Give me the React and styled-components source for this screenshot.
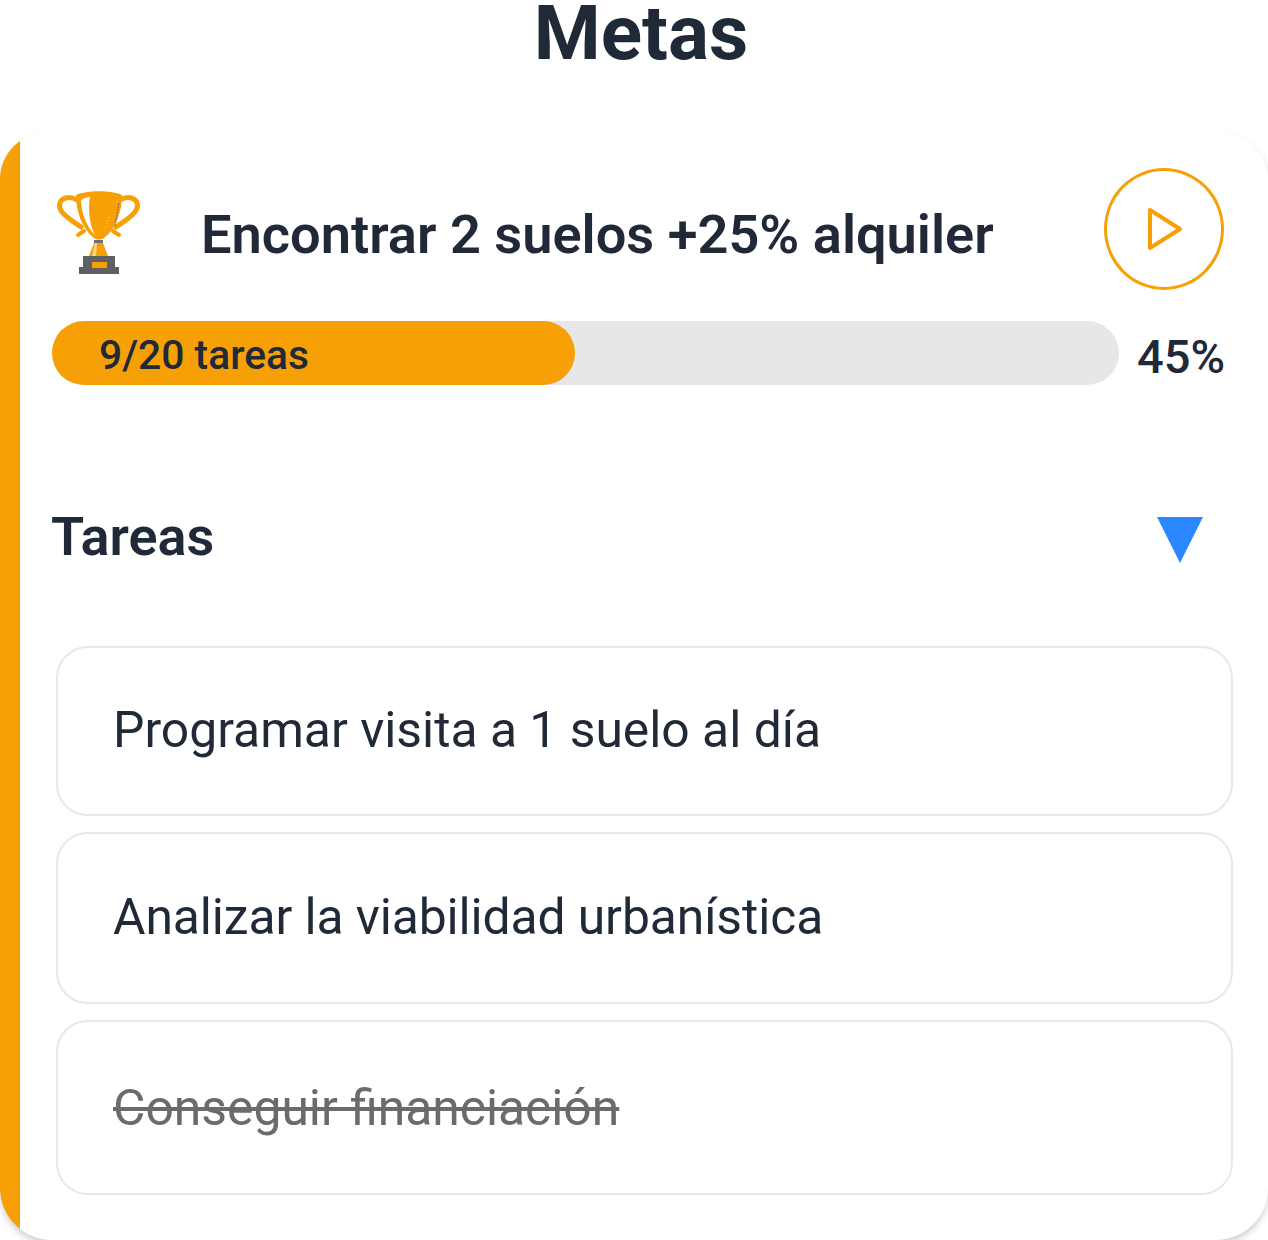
import styled, { createGlobalStyle } from 'styled-components';

const Global = createGlobalStyle`
  html, body {
    margin: 0;
    padding: 0;
    background: #ffffff;
  }
  body {
    font-family: Roboto, "Liberation Sans", sans-serif;
    color: #1f2937;
  }
`;

const Page = styled.div`
  width: 1268px;
  height: 1240px;
  overflow: hidden;
  display: flex;
  flex-direction: column;
`;

const Title = styled.h1`
  flex: none;
  margin: 0;
  height: 133px;
  font-size: 76.5px;
  line-height: 66px;
  font-weight: 700;
  text-align: center;
  color: #1f2937;
  padding-left: 14px;
  box-sizing: border-box;
`;

const Card = styled.section`
  flex: none;
  height: 1107px;
  display: flex;
  overflow: hidden;
  border-radius: 46px 46px 52px 52px;
  box-shadow: 0 4px 6px rgba(0, 0, 0, 0.18);
  background: #ffffff;
`;

const Accent = styled.div`
  flex: none;
  width: 20px;
  background: #f6a006;
`;

const Body = styled.div`
  flex: 1;
  min-width: 0;
  padding: 35px 35px 0 32px;
`;

const GoalRow = styled.div`
  display: flex;
  align-items: center;
  height: 122px;
`;

const Trophy = styled.svg`
  width: 84px;
  height: 84px;
  flex: none;
  margin: 8px 0 0 5px;
  overflow: visible;
`;

const GoalName = styled.h2`
  margin: 11px 0 0 60px;
  flex: 1;
  font-size: 54.2px;
  line-height: 60px;
  font-weight: 600;
  color: #1f2937;
  white-space: nowrap;
`;

const PlayButton = styled.button`
  box-sizing: border-box;
  flex: none;
  width: 120px;
  height: 122px;
  margin-right: 9px;
  padding: 0;
  border: 3px solid #f6a006;
  border-radius: 50%;
  background: transparent;
  display: flex;
  align-items: center;
  justify-content: center;
`;

const ProgressRow = styled.div`
  display: flex;
  align-items: flex-start;
  gap: 18px;
  margin-top: 31px;
`;

const Track = styled.div`
  flex: none;
  width: 1067px;
  height: 64px;
  border-radius: 32px;
  background: #e7e7e9;
`;

const Fill = styled.div`
  height: 100%;
  border-radius: 32px;
  background: #f6a006;
  box-sizing: border-box;
  padding-left: 47px;
  font-size: 40.8px;
  line-height: 69px;
  font-weight: 500;
  color: #1f2937;
  white-space: nowrap;
`;

const Percent = styled.span`
  font-size: 47px;
  line-height: 72px;
  font-weight: 500;
  color: #1f2937;
`;

const TasksHeader = styled.div`
  display: flex;
  align-items: center;
  justify-content: space-between;
  margin-top: 109px;
  height: 70px;
  padding-right: 30px;
`;

const TasksTitle = styled.h3`
  margin: 0 0 0 -1px;
  font-size: 54px;
  line-height: 70px;
  font-weight: 600;
  color: #1f2937;
`;

const Arrow = styled.svg`
  width: 46px;
  height: 46px;
  margin-top: 6px;
`;

const TaskList = styled.ul`
  list-style: none;
  margin: 74px 0 0 4px;
  padding: 0;
  display: flex;
  flex-direction: column;
  gap: 16px;
`;

const Task = styled.li`
  box-sizing: border-box;
  width: 1177px;
  height: ${(p) => p.$h}px;
  border: 2px solid #e8e8ea;
  border-radius: 32px;
  padding: 0 0 ${(p) => p.$lift || 0}px 55px;
  display: flex;
  align-items: center;
  font-size: 49.8px;
  font-weight: 400;
  letter-spacing: ${(p) => p.$tight || 0}px;
  color: ${(p) => (p.$done ? '#6b6b6d' : '#1f2937')};
  text-decoration: ${(p) => (p.$done ? 'line-through' : 'none')};
`;

const tasks = [
  { id: 1, text: 'Programar visita a 1 suelo al día', h: 170, lift: 2 },
  { id: 2, text: 'Analizar la viabilidad urbanística', h: 172, lift: 3, tight: -0.1 },
  { id: 3, text: 'Conseguir financiación', h: 175, done: true },
];

export default function App() {
  return (
    <Page>
      <Global />
      <Title>Metas</Title>
      <Card>
        <Accent />
        <Body>
          <GoalRow>
            <Trophy viewBox="0 0 84 84">
              <g fill="none" stroke="#f6a006" strokeWidth="5" strokeLinecap="round">
                <path d="M20 9 C12 4 3 7 2.5 14 C2 22 14 29 24 36" />
                <path d="M63 9 C71 4 80 7 80.5 14 C81 22 69 29 59 36" />
                <path d="M21 44 L27 40" strokeWidth="4" />
                <path d="M62 44 L56 40" strokeWidth="4" />
              </g>
              <path d="M19 4 C30 -1 54 -1 65 4 C65 20 59 38 47 47 C44 49 40 49 37 47 C25 38 19 20 19 4 Z" fill="#f6a006" />
              <path d="M24 9 C27 7 30 6 33 6 C31 18 32 32 38 44 C30 36 24 22 24 9 Z" fill="#ffffff" />
              <path d="M62 12 L58 35" fill="none" stroke="#6b7280" strokeWidth="1.5" strokeDasharray="2 1" opacity="0.75" />
              <path d="M52 26 L48 38" fill="none" stroke="#fcd58a" strokeWidth="1" strokeDasharray="1 2" />
              <path d="M37 52 H46 L51 65 H32 Z" fill="#f6a006" />
              <path d="M38 52 H40 L39 65 H35 Z" fill="#fbd38d" />
              <rect x="37" y="49" width="9" height="3" fill="#6b6f76" />
              <path d="M26 65 H58 V76 H62 V83 H22 V76 H26 Z" fill="#5f6064" />
              <rect x="35" y="71" width="15" height="6" fill="#f6a006" />
            </Trophy>
            <GoalName>Encontrar 2 suelos +25% alquiler</GoalName>
            <PlayButton aria-label="Iniciar">
              <svg width="40" height="48" viewBox="0 0 40 48">
                <path d="M6 5 L36 24 L6 43 Z" fill="none" stroke="#f6a006" strokeWidth="4" strokeLinejoin="round" />
              </svg>
            </PlayButton>
          </GoalRow>
          <ProgressRow>
            <Track>
              <Fill style={{ width: 'calc(45% + 43px)' }}>9/20 tareas</Fill>
            </Track>
            <Percent>45%</Percent>
          </ProgressRow>
          <TasksHeader>
            <TasksTitle>Tareas</TasksTitle>
            <Arrow viewBox="0 0 46 46">
              <path d="M0 0 H46 L23 46 Z" fill="#2b87ff" />
            </Arrow>
          </TasksHeader>
          <TaskList>
            {tasks.map((t) => (
              <Task key={t.id} $h={t.h} $lift={t.lift} $tight={t.tight} $done={t.done}>{t.text}</Task>
            ))}
          </TaskList>
        </Body>
      </Card>
    </Page>
  );
}
